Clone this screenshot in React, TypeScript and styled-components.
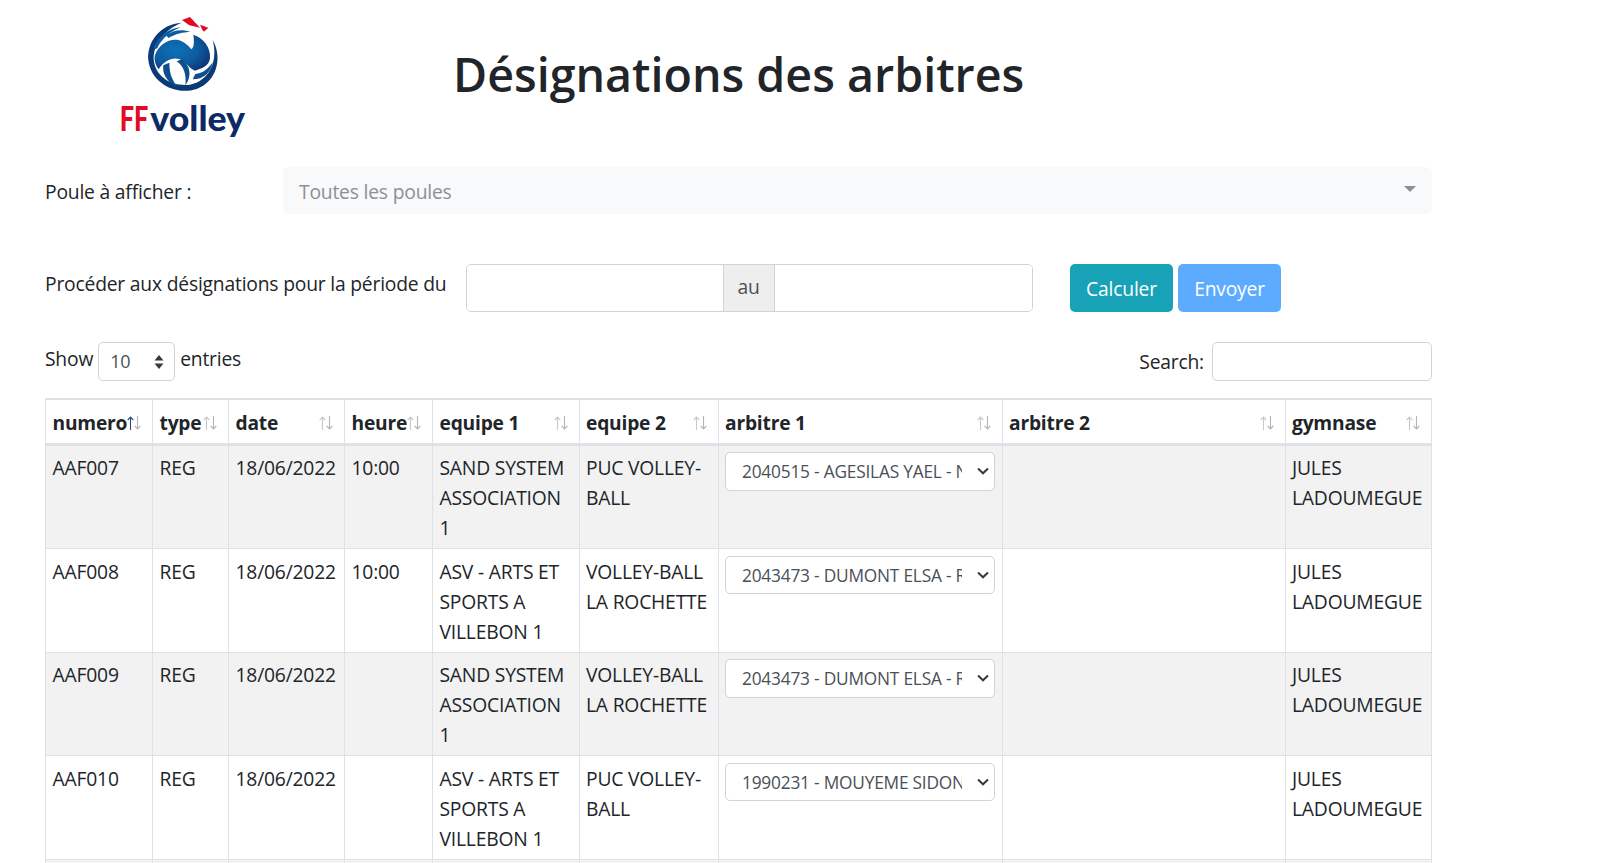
import React from 'react';
import styled, { createGlobalStyle } from 'styled-components';

const GlobalStyle = createGlobalStyle`
  html, body {
    margin: 0;
    height: 100%;
    overflow: hidden;
    background: #fff;
  }
  body {
    font-family: 'Open Sans', 'Noto Sans', sans-serif;
    font-size: 19.3px;
    letter-spacing: -0.2px;
    line-height: 30px;
    color: #212529;
  }
  * {
    box-sizing: border-box;
  }
`;

interface Match {
  numero: string;
  date: string;
  heure: string;
  equipe1: string;
  equipe2: string;
  arbitre: string;
}

const matches: Match[] = [
  {
    numero: 'AAF007',
    date: '18/06/2022',
    heure: '10:00',
    equipe1: 'SAND SYSTEM ASSOCIATION 1',
    equipe2: 'PUC VOLLEY-BALL',
    arbitre: '2040515 - AGESILAS YAEL - NATIONAL',
  },
  {
    numero: 'AAF008',
    date: '18/06/2022',
    heure: '10:00',
    equipe1: 'ASV - ARTS ET SPORTS A VILLEBON 1',
    equipe2: 'VOLLEY-BALL LA ROCHETTE',
    arbitre: '2043473 - DUMONT ELSA - REGIONAL',
  },
  {
    numero: 'AAF009',
    date: '18/06/2022',
    heure: '',
    equipe1: 'SAND SYSTEM ASSOCIATION 1',
    equipe2: 'VOLLEY-BALL LA ROCHETTE',
    arbitre: '2043473 - DUMONT ELSA - REGIONAL',
  },
  {
    numero: 'AAF010',
    date: '18/06/2022',
    heure: '',
    equipe1: 'ASV - ARTS ET SPORTS A VILLEBON 1',
    equipe2: 'PUC VOLLEY-BALL',
    arbitre: '1990231 - MOUYEME SIDONIE - REGIONAL',
  },
  {
    numero: 'AAF011',
    date: '18/06/2022',
    heure: '',
    equipe1: 'SAND SYSTEM ASSOCIATION 1',
    equipe2: 'PUC VOLLEY-BALL',
    arbitre: '2040515 - AGESILAS YAEL - NATIONAL',
  },
];

const columns = [
  { label: 'numero', width: 107, active: true },
  { label: 'type', width: 76 },
  { label: 'date', width: 116 },
  { label: 'heure', width: 88 },
  { label: 'equipe 1', width: 146.5 },
  { label: 'equipe 2', width: 139 },
  { label: 'arbitre 1', width: 284 },
  { label: 'arbitre 2', width: 283 },
  { label: 'gymnase', width: 146.5 },
];

const chevron =
  "data:image/svg+xml,%3Csvg xmlns='http://www.w3.org/2000/svg' width='12' height='8' viewBox='0 0 12 8'%3E%3Cpath d='M1 1.5 L6 6.3 L11 1.5' fill='none' stroke='%23343a40' stroke-width='2'/%3E%3C/svg%3E";

const Logo = () => (
  <LogoSvg viewBox="0 0 405 390" aria-label="FFvolley">
    <defs>
      <radialGradient id="ball" cx="0.38" cy="0.42" r="0.7">
        <stop offset="0" stopColor="#0f72b8" />
        <stop offset="0.6" stopColor="#0c5a9e" />
        <stop offset="1" stopColor="#0a3572" />
      </radialGradient>
    </defs>
    <g transform="translate(75 0)">
      <path
        d="M218 84 C248 135 232 208 170 231 C105 252 33 212 25 145 C20 90 60 36 125 32 C78 50 40 95 41 140 C44 192 92 224 150 218 C205 208 236 150 218 84 Z"
        fill="#0b3a76"
      />
      <path
        d="M40 108 C55 72 85 50 122 46 C95 56 66 78 52 108 C48 112 43 112 40 108 Z"
        fill="#0e5c9f"
      />
      <path
        d="M78 70 C98 55 125 50 152 60 C130 60 105 66 86 78 Z"
        fill="#0e5c9f"
      />
      <path
        d="M44 132 C56 98 85 80 114 84 C132 88 144 100 154 112 C164 104 162 86 160 68 C190 78 212 106 210 136 C209 154 200 166 165 176 C150 170 140 154 128 146 C105 132 75 142 56 172 C47 160 42 146 44 132 Z"
        fill="url(#ball)"
      />
      <path
        d="M70 160 C66 184 80 212 114 226 C97 206 88 185 88 152 Z"
        fill="#0c4f90"
      />
      <path
        d="M110 148 C132 162 140 190 136 220 C156 194 152 162 126 142 Z"
        fill="#0c4f90"
      />
      <path
        d="M166 186 C188 184 206 170 218 150 C214 178 194 202 158 202 Z"
        fill="#0c4f90"
      />
      <path d="M126 24 L150 15 L180 47 L148 40 Z" fill="#e30a25" />
      <path d="M180 38 L205 47 L192 59 L186 52 Z" fill="#e30a25" />
    </g>
    <LogoText x="14" y="358" fill="#e30a25" textLength="86" lengthAdjust="spacingAndGlyphs">
      FF
    </LogoText>
    <LogoText x="106" y="358" fill="#0c2a63" textLength="284" lengthAdjust="spacingAndGlyphs">
      volley
    </LogoText>
  </LogoSvg>
);

const SortIcon = ({ $active }: { $active?: boolean }) => (
  <SortArrows>
    <svg width="7" height="14" viewBox="0 0 7 14">
      <path
        d="M3.5 14 V1 M0.7 4 L3.5 1 L6.3 4"
        fill="none"
        stroke={$active ? '#2a5078' : '#c9c9c9'}
        strokeWidth="1.1"
      />
    </svg>
    <svg width="7" height="14" viewBox="0 0 7 14">
      <path
        d="M3.5 0 V13 M0.7 10 L3.5 13 L6.3 10"
        fill="none"
        stroke="#b4b4b4"
        strokeWidth="1.1"
      />
    </svg>
  </SortArrows>
);

export default function App() {
  return (
    <Page>
      <GlobalStyle />
      <Header>
        <LogoColumn>
          <Logo />
        </LogoColumn>
        <Title>Désignations des arbitres</Title>
      </Header>

      <PouleRow>
        <PouleLabel>Poule à afficher :</PouleLabel>
        <PouleSelect>
          <span>Toutes les poules</span>
          <Caret />
        </PouleSelect>
      </PouleRow>

      <PeriodRow>
        <PeriodLabel>Procéder aux désignations pour la période du</PeriodLabel>
        <DateGroup>
          <DateInput type="text" />
          <DateAddon>au</DateAddon>
          <DateInput type="text" />
        </DateGroup>
        <Buttons>
          <ActionButton $color="#17a2b8" type="button">
            Calculer
          </ActionButton>
          <ActionButton $color="#5cabff" type="button">
            Envoyer
          </ActionButton>
        </Buttons>
      </PeriodRow>

      <TableTools>
        <LengthLabel>
          Show
          <LengthBox>
            <LengthValue>10</LengthValue>
            <svg width="10" height="16" viewBox="0 0 10 16">
              <path d="M5 1 L9.5 6.5 H0.5 Z M5 15 L9.5 9.5 H0.5 Z" fill="#343a40" />
            </svg>
          </LengthBox>
          entries
        </LengthLabel>
        <SearchLabel>
          Search:
          <SearchInput type="search" />
        </SearchLabel>
      </TableTools>

      <Table>
        <thead>
          <tr>
            {columns.map((col) => (
              <HeadCell key={col.label} $width={col.width}>
                {col.label}
                <SortIcon $active={col.active} />
              </HeadCell>
            ))}
          </tr>
        </thead>
        <tbody>
          {matches.map((m) => (
            <BodyRow key={m.numero}>
              <Cell>{m.numero}</Cell>
              <Cell>REG</Cell>
              <Cell>{m.date}</Cell>
              <Cell>{m.heure}</Cell>
              <Cell>{m.equipe1}</Cell>
              <Cell>{m.equipe2}</Cell>
              <Cell>
                <RefereeSelect defaultValue={m.arbitre}>
                  <option>{m.arbitre}</option>
                </RefereeSelect>
              </Cell>
              <Cell />
              <Cell>JULES LADOUMEGUE</Cell>
            </BodyRow>
          ))}
        </tbody>
      </Table>
    </Page>
  );
}

const Page = styled.div`
  width: 1432px;
  height: 863px;
  overflow: hidden;
  margin-left: 45px;
`;

const Header = styled.header`
  display: flex;
  align-items: flex-start;
  height: 167px;
`;

const LogoColumn = styled.div`
  width: 408px;
  padding: 12px 0 0 70px;
  flex-shrink: 0;
`;

const LogoSvg = styled.svg`
  display: block;
  width: 135px;
  height: 130px;
`;

const LogoText = styled.text`
  font-family: 'Lato', 'Liberation Sans', sans-serif;
  font-size: 104px;
  font-weight: 900;
  letter-spacing: 0;
`;

const Title = styled.h1`
  margin: 44px 0 0;
  font-size: 46.6px;
  font-weight: 600;
  line-height: 60px;
  letter-spacing: 0;
`;

const PouleRow = styled.div`
  display: flex;
  align-items: center;
  width: 1387px;
  height: 47px;
`;

const PouleLabel = styled.label`
  width: 238px;
  padding-top: 2px;
  flex-shrink: 0;
`;

const PouleSelect = styled.div`
  position: relative;
  flex: 1;
  height: 47px;
  display: flex;
  align-items: center;
  padding: 2px 15px 0 16px;
  background: #f8f9fa;
  border-radius: 6px;
  color: #8b9095;
`;

const Caret = styled.span`
  position: absolute;
  right: 16px;
  top: 19px;
  width: 0;
  height: 0;
  border-left: 6px solid transparent;
  border-right: 6px solid transparent;
  border-top: 6px solid #8b9095;
`;

const PeriodRow = styled.div`
  display: flex;
  align-items: flex-start;
  margin-top: 50px;
  height: 78px;
`;

const PeriodLabel = styled.label`
  width: 421px;
  flex-shrink: 0;
  padding-top: 5px;
  white-space: nowrap;
`;

const DateGroup = styled.div`
  display: flex;
  width: 567px;
  height: 48px;
  border: 1px solid #ced4da;
  border-radius: 5px;
  overflow: hidden;
`;

const DateInput = styled.input`
  flex: 1;
  min-width: 0;
  border: 0;
  outline: 0;
  background: #fff;
`;

const DateAddon = styled.span`
  width: 52px;
  flex-shrink: 0;
  display: flex;
  align-items: center;
  justify-content: center;
  margin: 0 1px 0 -1px;
  padding-bottom: 3px;
  background: #eee;
  border-left: 1px solid #ced4da;
  border-right: 1px solid #ced4da;
  color: #495057;
`;

const Buttons = styled.div`
  display: flex;
  gap: 5px;
  margin-left: 37px;
`;

const ActionButton = styled.button<{ $color: string }>`
  width: 103px;
  height: 48px;
  padding: 1px 0 0;
  border: 0;
  border-radius: 5px;
  background: ${(p) => p.$color};
  color: #fff;
  font: inherit;
  letter-spacing: inherit;
`;

const TableTools = styled.div`
  display: flex;
  justify-content: space-between;
  align-items: flex-start;
  width: 1387px;
  height: 56px;
`;

const LengthLabel = styled.label`
  display: flex;
  align-items: flex-start;
  gap: 5px;
  line-height: 34px;
`;

const LengthBox = styled.span`
  display: flex;
  align-items: center;
  justify-content: space-between;
  width: 77px;
  height: 39px;
  padding: 0 10px 0 11px;
  border: 1px solid #ced4da;
  border-radius: 5px;
  color: #495057;
`;

const LengthValue = styled.span`
  font-size: 18px;
  padding-bottom: 2px;
`;

const SearchLabel = styled.label`
  display: flex;
  align-items: center;
  gap: 8px;
`;

const SearchInput = styled.input`
  width: 220px;
  height: 39px;
  border: 1px solid #ced4da;
  border-radius: 5px;
  outline: 0;
`;

const Table = styled.table`
  table-layout: fixed;
  width: 1386px;
  border-collapse: collapse;
  border-top: 2px solid #dee2e6;
`;

const HeadCell = styled.th<{ $width: number }>`
  position: relative;
  width: ${(p) => p.$width}px;
  height: 45px;
  padding: 3px 6.5px 0;
  text-align: left;
  font-size: 19.2px;
  font-weight: 700;
  border: 1px solid #dee2e6;
  border-top: 0;
  border-bottom: 3px solid #dee2e6;
  white-space: nowrap;
`;

const SortArrows = styled.span`
  position: absolute;
  right: 11px;
  top: 16px;
  display: flex;
`;

const BodyRow = styled.tr`
  &:nth-child(odd) {
    background: #f2f2f2;
  }
`;

const Cell = styled.td`
  padding: 7.5px 6.5px 5px;
  vertical-align: top;
  border: 1px solid #dee2e6;
`;

const RefereeSelect = styled.select`
  display: block;
  width: 100%;
  height: 38.5px;
  margin-top: -1px;
  padding: 2px 32px 0 16px;
  appearance: none;
  border: 1px solid #ced4da;
  border-radius: 5px;
  background: #fff url("${chevron}") no-repeat right 5px center;
  color: #495057;
  font: inherit;
  font-size: 17.3px;
  letter-spacing: -0.2px;
  outline: 0;
`;
